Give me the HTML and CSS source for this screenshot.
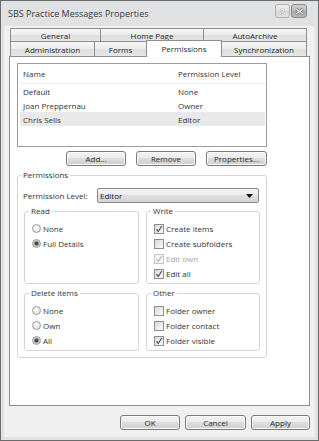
FILE: index.html
```html
<!DOCTYPE html>
<html lang="en">
<head>
    <meta charset="UTF-8">
    <title>SBS Practice Messages Properties</title>
    <link rel="stylesheet" href="styles.css">
</head>
<body>
    <div class="window">
        <div class="titlebar">
            <span class="title">SBS Practice Messages Properties</span>
            <div class="caption">
                <span class="cap help">?</span>
                <span class="cap close">
                    <svg width="9" height="7" viewBox="0 0 9 7"><path d="M1 1L8 6M8 1L1 6" stroke="#6a6a6a" stroke-width="2.6"/><path d="M1 1L8 6M8 1L1 6" stroke="#f4f4f4" stroke-width="1.2"/></svg>
                </span>
            </div>
        </div>
        <div class="client">
            <div class="tabs">
                <div class="tab-row back">
                    <div class="tab" style="width:91px">General</div>
                    <div class="tab" style="width:104px">Home Page</div>
                    <div class="tab" style="width:104px">AutoArchive</div>
                </div>
                <div class="tab-row front">
                    <div class="tab" style="width:85px">Administration</div>
                    <div class="tab" style="width:53px">Forms</div>
                    <div class="tab active" style="width:76px">Permissions</div>
                    <div class="tab" style="width:86px">Synchronization</div>
                </div>
            </div>
            <div class="panel">
                <div class="list">
                    <div class="list-head">
                        <span class="col-name">Name</span>
                        <span>Permission Level</span>
                    </div>
                    <div class="list-row"><span class="col-name">Default</span><span>None</span></div>
                    <div class="list-row"><span class="col-name">Joan Preppernau</span><span>Owner</span></div>
                    <div class="list-row selected"><span class="col-name">Chris Sells</span><span>Editor</span></div>
                </div>
                <div class="list-buttons">
                    <button class="btn" style="width:60px">Add...</button>
                    <button class="btn" style="width:60px">Remove</button>
                    <button class="btn" style="width:61px">Properties...</button>
                </div>
                <fieldset class="group perms">
                    <legend>Permissions</legend>
                    <div class="level-row">
                        <span class="level-label">Permission Level:</span>
                        <div class="combo">
                            <span>Editor</span>
                            <svg width="7" height="4" viewBox="0 0 7 4"><path d="M0 0H7L3.5 4Z" fill="#111"/></svg>
                        </div>
                    </div>
                    <div class="sub-grid">
                        <fieldset class="group sub">
                            <legend>Read</legend>
                            <div class="opt"><span class="radio"></span>None</div>
                            <div class="opt"><span class="radio on"></span>Full Details</div>
                        </fieldset>
                        <fieldset class="group sub">
                            <legend>Write</legend>
                            <div class="opt"><span class="check on"><svg width="8" height="8" viewBox="0 0 8 8"><path d="M1.5 4.2L3.2 6.5L6.8 1" fill="none" stroke="#4a4a4a" stroke-width="1.1"/></svg></span>Create items</div>
                            <div class="opt"><span class="check"></span>Create subfolders</div>
                            <div class="opt disabled"><span class="check on"><svg width="8" height="8" viewBox="0 0 8 8"><path d="M1.5 4.2L3.2 6.5L6.8 1" fill="none" stroke="#b4b4b4" stroke-width="1.1"/></svg></span>Edit own</div>
                            <div class="opt"><span class="check on"><svg width="8" height="8" viewBox="0 0 8 8"><path d="M1.5 4.2L3.2 6.5L6.8 1" fill="none" stroke="#4a4a4a" stroke-width="1.1"/></svg></span>Edit all</div>
                        </fieldset>
                        <fieldset class="group sub">
                            <legend>Delete items</legend>
                            <div class="opt"><span class="radio"></span>None</div>
                            <div class="opt"><span class="radio"></span>Own</div>
                            <div class="opt"><span class="radio on"></span>All</div>
                        </fieldset>
                        <fieldset class="group sub">
                            <legend>Other</legend>
                            <div class="opt"><span class="check"></span>Folder owner</div>
                            <div class="opt"><span class="check"></span>Folder contact</div>
                            <div class="opt"><span class="check on"><svg width="8" height="8" viewBox="0 0 8 8"><path d="M1.5 4.2L3.2 6.5L6.8 1" fill="none" stroke="#4a4a4a" stroke-width="1.1"/></svg></span>Folder visible</div>
                        </fieldset>
                    </div>
                </fieldset>
            </div>
            <div class="dialog-buttons">
                <button class="btn" style="width:60px">OK</button>
                <button class="btn" style="width:61px">Cancel</button>
                <button class="btn" style="width:59px">Apply</button>
            </div>
        </div>
    </div>
</body>
</html>
```
FILE: styles.css
```css
* {
    box-sizing: border-box;
}
body {
    margin: 0;
    background: #fff;
    font-family: "Open Sans", "Noto Sans", sans-serif;
    font-size: 8px;
    color: #333;
}
.window {
    width: 319px;
    height: 441px;
    border: 1px solid #6b6b6b;
    background: #e0e1e3;
    padding: 0 3px 3px;
    display: flex;
    flex-direction: column;
}
.titlebar {
    height: 25px;
    display: flex;
    align-items: center;
    padding: 0 8px 0 4px;
}
.title {
    flex: 1;
    font-size: 9px;
    color: #3a3a3a;
}
.caption {
    display: flex;
    gap: 1px;
    align-self: flex-start;
    margin-top: 3px;
}
.cap {
    width: 15px;
    height: 14px;
    border: 1px solid #b0b0b0;
    border-radius: 3px;
    background: linear-gradient(#efefef, #e0e0e0 50%, #d6d6d6 51%, #e0e0e0);
    display: flex;
    align-items: center;
    justify-content: center;
}
.cap.help {
    color: #f6f6f6;
    font-weight: bold;
    font-size: 9px;
    text-shadow: 0 0 1px #888, 0 0 1px #888;
}
.cap.close {
    width: 16px;
    border-color: #8a8a8a;
    background: linear-gradient(#d0d0d0, #b9b9b9 50%, #a8a8a8 51%, #b8b8b8);
}
.client {
    flex: 1;
    background: #f0f0f0;
    padding: 2px 5px 0;
}
.tab-row {
    display: flex;
    margin-left: 1px;
}
.tab-row.back {
    height: 13px;
}
.tab-row.front {
    height: 15px;
}
.tab {
    height: 100%;
    border: 1px solid #8e8e8e;
    border-bottom: 0;
    margin-right: -1px;
    background: linear-gradient(#f6f6f6, #ebebeb 50%, #dedede 51%, #e6e6e6);
    display: flex;
    align-items: center;
    justify-content: center;
    color: #2a2a2a;
}
.tab.active {
    height: 17px;
    margin-top: -1px;
    background: #fff;
    position: relative;
    z-index: 1;
    padding-bottom: 2px;
}
.panel {
    height: 350px;
    border: 1px solid #8e8f8f;
    background: #fff;
}
.list {
    margin: 6px 0 0 7px;
    width: 250px;
    height: 84px;
    border: 1px solid #9c9c9c;
}
.list-head {
    height: 20px;
    display: flex;
    align-items: center;
    padding-left: 5px;
    border-bottom: 1px solid #f0f0f0;
}
.list-row {
    height: 14px;
    display: flex;
    align-items: center;
    margin: 0 1px 0 2px;
    padding-left: 3px;
}
.list-row.selected {
    background: #e9e9e9;
}
.col-name {
    width: 155px;
}
.list-buttons {
    width: 250px;
    margin: 4px 0 0 7px;
    display: flex;
    justify-content: flex-end;
    gap: 10px;
}
.btn {
    height: 15px;
    padding: 0;
    border: 1px solid #7a7a7a;
    border-radius: 3px;
    background: linear-gradient(#f3f3f3, #ebebeb 45%, #dddddd 50%, #cfcfcf);
    box-shadow: inset 0 0 0 1px #fbfbfb;
    font: inherit;
    color: #2a2a2a;
}
.group {
    margin: 0;
    border: 1px solid #d5d5d5;
    border-radius: 3px;
    min-width: 0;
}
.group legend {
    padding: 0 2px;
    line-height: 12px;
}
.perms {
    width: 250px;
    margin: 3px 0 0 7px;
    padding: 0 5px 6px;
}
.perms > legend {
    margin-left: -2px;
}
.level-row {
    margin-top: 7px;
    display: flex;
    align-items: center;
}
.level-label {
    width: 74px;
}
.combo {
    width: 162px;
    height: 15px;
    border: 1px solid #8a8a8a;
    border-radius: 2px;
    background: linear-gradient(#f4f4f4, #ececec 45%, #dfdfdf 50%, #d6d6d6);
    display: flex;
    align-items: center;
    justify-content: space-between;
    padding: 0 5px 0 2px;
    color: #1a1a1a;
}
.sub-grid {
    margin: 2px 0 0 1px;
    display: grid;
    grid-template-columns: 115px 114px;
    column-gap: 7px;
    row-gap: 3px;
}
.sub {
    padding: 4px 0 2px 7px;
}
.sub > legend {
    margin-left: -3px;
}
.opt {
    height: 15px;
    display: flex;
    align-items: center;
    gap: 2px;
}
.opt.disabled {
    color: #a3a3a3;
}
.radio {
    width: 9px;
    height: 9px;
    border-radius: 50%;
    border: 1px solid #9c9c9c;
    background: radial-gradient(circle at 40% 35%, #fdfdfd, #dcdcdc);
}
.radio.on {
    background: radial-gradient(circle, #4e4e4e 0 1.6px, #9a9a9a 2.2px, #e4e4e4 3.4px);
}
.check {
    width: 10px;
    height: 10px;
    border: 1px solid #8f8f8f;
    background: linear-gradient(135deg, #d8d8d8, #fbfbfb);
    display: flex;
    align-items: center;
    justify-content: center;
}
.opt.disabled .check {
    border-color: #c6c6c6;
    background: #f4f4f4;
}
.dialog-buttons {
    margin-top: 9px;
    display: flex;
    justify-content: flex-end;
    gap: 5px;
}
```
